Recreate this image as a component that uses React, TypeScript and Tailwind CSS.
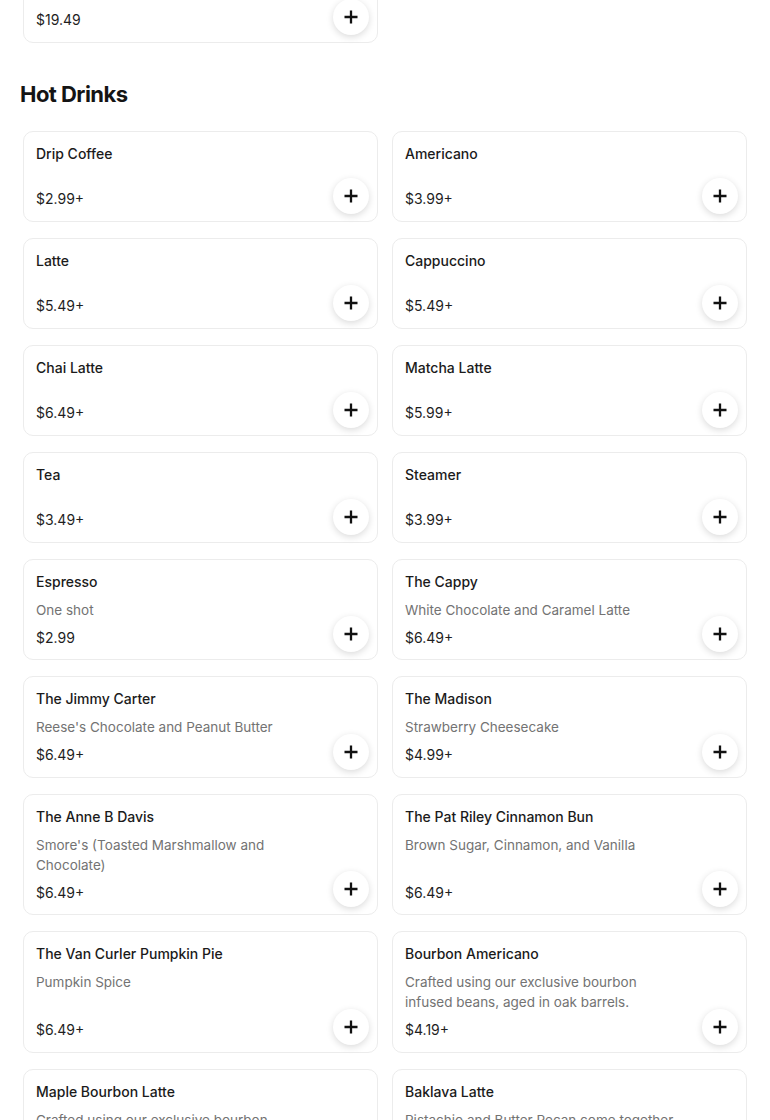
import React from "react";

type Item = {
  name: string;
  desc?: string;
  price: string;
};

const HOT_DRINKS: Item[] = [
  { name: "Drip Coffee", price: "$2.99+" },
  { name: "Americano", price: "$3.99+" },
  { name: "Latte", price: "$5.49+" },
  { name: "Cappuccino", price: "$5.49+" },
  { name: "Chai Latte", price: "$6.49+" },
  { name: "Matcha Latte", price: "$5.99+" },
  { name: "Tea", price: "$3.49+" },
  { name: "Steamer", price: "$3.99+" },
  { name: "Espresso", desc: "One shot", price: "$2.99" },
  { name: "The Cappy", desc: "White Chocolate and Caramel Latte", price: "$6.49+" },
  { name: "The Jimmy Carter", desc: "Reese's Chocolate and Peanut Butter", price: "$6.49+" },
  { name: "The Madison", desc: "Strawberry Cheesecake", price: "$4.99+" },
  { name: "The Anne B Davis", desc: "Smore's (Toasted Marshmallow and Chocolate)", price: "$6.49+" },
  { name: "The Pat Riley Cinnamon Bun", desc: "Brown Sugar, Cinnamon, and Vanilla", price: "$6.49+" },
  { name: "The Van Curler Pumpkin Pie", desc: "Pumpkin Spice", price: "$6.49+" },
  {
    name: "Bourbon Americano",
    desc: "Crafted using our exclusive bourbon infused beans, aged in oak barrels.",
    price: "$4.19+",
  },
  {
    name: "Maple Bourbon Latte",
    desc: "Crafted using our exclusive bourbon infused beans, with real maple syrup.",
    price: "$6.49+",
  },
  {
    name: "Baklava Latte",
    desc: "Pistachio and Butter Pecan come together for a sweet treat.",
    price: "$6.49+",
  },
];

const PlusIcon = () => (
  <svg width="14" height="14" viewBox="0 0 14 14" fill="none">
    <path d="M7 0.5V13.5M0.5 7H13.5" stroke="#111" strokeWidth="2.3" />
  </svg>
);

const ItemCard = ({ item }: { item: Item }) => (
  <div className="flex min-h-[91px] rounded-[10px] border border-[#ececec] bg-white">
    <div className="flex flex-1 flex-col gap-2 pt-3 pb-[11.5px] pl-3 pr-3">
      <div className="text-sm font-medium leading-5 text-[#1b1b1b]">{item.name}</div>
      {item.desc && <div className="text-[13.5px] leading-5 text-[#737373]">{item.desc}</div>}
      <div className="mt-auto text-sm leading-5 text-[#1f1f1f]">{item.price}</div>
    </div>
    <div className="flex items-end px-2 pb-[7px]">
      <button
        type="button"
        aria-label={`Add ${item.name}`}
        className="flex h-9 w-9 items-center justify-center rounded-full bg-white shadow-[0_2px_7px_rgba(0,0,0,0.15)]"
      >
        <PlusIcon />
      </button>
    </div>
  </div>
);

export default function App() {
  return (
    <div className="min-h-screen overflow-hidden bg-white font-['Inter','Liberation_Sans',sans-serif]">
      <div className="-mt-[59px]">
        {/* tail of previous section */}
        <div className="grid grid-cols-2 gap-x-[14px] px-[23px]">
          <ItemCard item={{ name: "Donut Dozen", desc: "A dozen donuts for sharing", price: "$19.49" }} />
        </div>

        <h2 className="mt-[37px] mb-[23px] px-5 text-[22px] font-bold leading-7 tracking-tight text-[#141414]">
          Hot Drinks
        </h2>

        <div className="grid grid-cols-2 gap-x-[14px] gap-y-4 px-[23px] pb-10">
          {HOT_DRINKS.map((item) => (
            <ItemCard key={item.name} item={item} />
          ))}
        </div>
      </div>
    </div>
  );
}
